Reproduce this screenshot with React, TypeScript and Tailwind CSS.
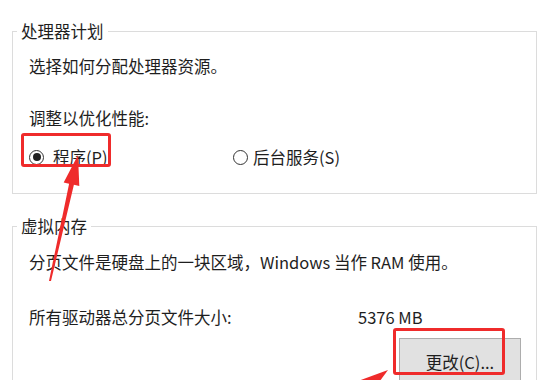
import React from 'react';

function Radio({ checked }: { checked?: boolean }) {
  return (
    <span className="flex h-[15px] w-[15px] shrink-0 items-center justify-center rounded-full border-[1.5px] border-[#333] bg-white">
      {checked && <span className="h-[8px] w-[8px] rounded-full bg-[#222]" />}
    </span>
  );
}

export default function App() {
  return (
    <div className="relative h-[380px] w-[537px] overflow-hidden bg-white font-['Noto_Sans_CJK_SC','Noto_Sans',sans-serif] text-[16.5px] leading-[20px] text-[#1e1e1e]">
      <div className="pt-[21px] pl-[12px]">
        {/* processor scheduling */}
        <fieldset className="border border-[#dcdcdc] pl-[16px] pb-[26px]">
          <legend className="-ml-[12px] h-[20px] px-[4px]">处理器计划</legend>
          <div className="mt-[15px] h-[20px]">选择如何分配处理器资源。</div>
          <div className="mt-[32px] h-[20px]">调整以优化性能:</div>
          <div className="mt-[19px] flex h-[20px] items-center">
            <div className="flex w-[204px] items-center gap-[9px]">
              <Radio checked />
              <span>程序(P)</span>
            </div>
            <div className="flex items-center gap-[5px]">
              <Radio />
              <span>后台服务(S)</span>
            </div>
          </div>
        </fieldset>

        {/* virtual memory */}
        <fieldset className="mt-[22px] border border-[#dcdcdc] pl-[16px] pb-[20px]">
          <legend className="-ml-[12px] h-[20px] px-[4px]">虚拟内存</legend>
          <div className="mt-[16px] h-[20px]">分页文件是硬盘上的一块区域，Windows 当作 RAM 使用。</div>
          <div className="mt-[35px] flex h-[20px]">
            <span className="w-[329px]">所有驱动器总分页文件大小:</span>
            <span>5376 MB</span>
          </div>
          <button className="ml-[370px] mt-[11px] flex h-[48px] w-[122px] items-center justify-center border border-[#adadad] bg-[#e1e1e1] text-[#1e1e1e]">
            更改(C)...
          </button>
        </fieldset>
      </div>

      {/* annotations */}
      <div className="pointer-events-none absolute left-[21px] top-[133px] h-[34px] w-[90px] rounded-[3px] border-[3px] border-[#ef2b2b]" />
      <div className="pointer-events-none absolute left-[393px] top-[328px] h-[47px] w-[112px] rounded-[3px] border-[3px] border-[#ef2b2b]" />
      <svg className="pointer-events-none absolute left-0 top-0" width="537" height="380" viewBox="0 0 537 380">
        <polygon
          fill="#ef2b2b"
          points="78,155 79.3,186 73.9,184.8 51,281 49,281 69.1,183.8 63.7,182.6"
        />
        <polygon fill="#ef2b2b" points="388,370 358.6,380.8 369.4,395.2" />
      </svg>
    </div>
  );
}
